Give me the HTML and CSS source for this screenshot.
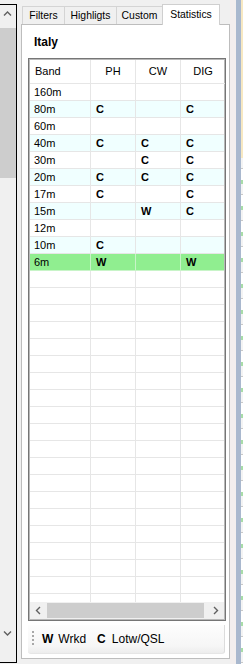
FILE: index.html
```html
<!DOCTYPE html>
<html>
<head>
<meta charset="utf-8">
<link rel="stylesheet" href="styles.css">
</head>
<body>
<div class="app">
  <div class="vscroll">
    <div class="vbtn"><svg width="16" height="17" viewBox="0 0 16 17"><path d="M4 10.5 L7.5 7 L11 10.5" fill="none" stroke="#606060" stroke-width="1.4"/></svg></div>
    <div class="vthumb"></div>
    <div class="vtrack"></div>
    <div class="vbtn"><svg width="16" height="17" viewBox="0 0 16 17"><path d="M4 6.5 L7.5 10 L11 6.5" fill="none" stroke="#606060" stroke-width="1.4"/></svg></div>
    <div class="vfoot"></div>
  </div>
  <div class="tabctl">
    <div class="tabstrip">
      <div class="tab t1">Filters</div>
      <div class="tab t2">Highligts</div>
      <div class="tab t3">Custom</div>
      <div class="tab t4 active">Statistics</div>
    </div>
    <div class="panel">
      <div class="country">Italy</div>
      <div class="grid">
        <div class="row hdr">
          <div class="cell left">Band</div><div class="cell">PH</div><div class="cell">CW</div><div class="cell">DIG</div>
        </div>
        <div class="gbody">
          <div class="row"><div class="cell">160m</div><div class="cell"></div><div class="cell"></div><div class="cell"></div></div>
          <div class="row alt"><div class="cell">80m</div><div class="cell v">C</div><div class="cell"></div><div class="cell v">C</div></div>
          <div class="row"><div class="cell">60m</div><div class="cell"></div><div class="cell"></div><div class="cell"></div></div>
          <div class="row alt"><div class="cell">40m</div><div class="cell v">C</div><div class="cell v">C</div><div class="cell v">C</div></div>
          <div class="row"><div class="cell">30m</div><div class="cell"></div><div class="cell v">C</div><div class="cell v">C</div></div>
          <div class="row alt"><div class="cell">20m</div><div class="cell v">C</div><div class="cell v">C</div><div class="cell v">C</div></div>
          <div class="row"><div class="cell">17m</div><div class="cell v">C</div><div class="cell"></div><div class="cell v">C</div></div>
          <div class="row alt"><div class="cell">15m</div><div class="cell"></div><div class="cell v">W</div><div class="cell v">C</div></div>
          <div class="row"><div class="cell">12m</div><div class="cell"></div><div class="cell"></div><div class="cell"></div></div>
          <div class="row alt"><div class="cell">10m</div><div class="cell v">C</div><div class="cell"></div><div class="cell"></div></div>
          <div class="row sel"><div class="cell">6m</div><div class="cell v">W</div><div class="cell"></div><div class="cell v">W</div></div>
          <div class="row"><div class="cell"></div><div class="cell"></div><div class="cell"></div><div class="cell"></div></div>
          <div class="row"><div class="cell"></div><div class="cell"></div><div class="cell"></div><div class="cell"></div></div>
          <div class="row"><div class="cell"></div><div class="cell"></div><div class="cell"></div><div class="cell"></div></div>
          <div class="row"><div class="cell"></div><div class="cell"></div><div class="cell"></div><div class="cell"></div></div>
          <div class="row"><div class="cell"></div><div class="cell"></div><div class="cell"></div><div class="cell"></div></div>
          <div class="row"><div class="cell"></div><div class="cell"></div><div class="cell"></div><div class="cell"></div></div>
          <div class="row"><div class="cell"></div><div class="cell"></div><div class="cell"></div><div class="cell"></div></div>
          <div class="row"><div class="cell"></div><div class="cell"></div><div class="cell"></div><div class="cell"></div></div>
          <div class="row"><div class="cell"></div><div class="cell"></div><div class="cell"></div><div class="cell"></div></div>
          <div class="row"><div class="cell"></div><div class="cell"></div><div class="cell"></div><div class="cell"></div></div>
          <div class="row"><div class="cell"></div><div class="cell"></div><div class="cell"></div><div class="cell"></div></div>
          <div class="row"><div class="cell"></div><div class="cell"></div><div class="cell"></div><div class="cell"></div></div>
          <div class="row"><div class="cell"></div><div class="cell"></div><div class="cell"></div><div class="cell"></div></div>
          <div class="row"><div class="cell"></div><div class="cell"></div><div class="cell"></div><div class="cell"></div></div>
          <div class="row"><div class="cell"></div><div class="cell"></div><div class="cell"></div><div class="cell"></div></div>
          <div class="row"><div class="cell"></div><div class="cell"></div><div class="cell"></div><div class="cell"></div></div>
          <div class="row"><div class="cell"></div><div class="cell"></div><div class="cell"></div><div class="cell"></div></div>
          <div class="row"><div class="cell"></div><div class="cell"></div><div class="cell"></div><div class="cell"></div></div>
          <div class="row"><div class="cell"></div><div class="cell"></div><div class="cell"></div><div class="cell"></div></div>
          <div class="row"><div class="cell"></div><div class="cell"></div><div class="cell"></div><div class="cell"></div></div>
        </div>
        <div class="hscroll">
          <div class="hbtn"><svg width="17" height="17" viewBox="0 0 17 17"><path d="M10 5 L6.5 8.5 L10 12" fill="none" stroke="#606060" stroke-width="1.4"/></svg></div>
          <div class="hthumb"></div>
          <div class="htrack"></div>
          <div class="hbtn"><svg width="17" height="17" viewBox="0 0 17 17"><path d="M7 5 L10.5 8.5 L7 12" fill="none" stroke="#606060" stroke-width="1.4"/></svg></div>
        </div>
      </div>
      <div class="legend">
        <div class="grip"></div>
        <b class="lw">W</b><span class="lt1">Wrkd</span>
        <b class="lc">C</b><span>Lotw/QSL</span>
      </div>
    </div>
  </div>
  <div class="rstrip">
    <div class="ra"></div>
    <div class="rb"></div>
    <div class="rc"><div class="rc-top"></div><div class="rc-bot"></div></div>
  </div>
</div>
</body>
</html>
```

FILE: styles.css
```css
* { box-sizing: border-box; margin: 0; padding: 0; }
html, body { width: 243px; height: 664px; overflow: hidden; }
body {
  background: #f0f0f0;
  font-family: "Liberation Sans", Arial, sans-serif;
  font-size: 11px;
  color: #000;
}
.app { display: flex; height: 664px; }

/* left vertical scrollbar */
.vscroll {
  flex: none;
  width: 17px;
  height: 659px;
  margin-top: 4px;
  border: 1px solid #000;
  border-left: 0;
  display: flex;
  flex-direction: column;
  background: #f0f0f0;
}
.vbtn { flex: none; height: 17px; display: flex; align-items: center; justify-content: center; }
.vbtn svg { display: block; }
.vthumb { flex: none; height: 150px; margin-top: 6px; background: #cdcdcd; }
.vtrack { flex: 1; }
.vfoot { flex: none; height: 20px; }

/* tab control */
.tabctl { flex: none; width: 209px; margin-left: 4px; display: flex; flex-direction: column; }
.tabstrip { height: 24px; display: flex; align-items: flex-end; padding-left: 1px; }
.tab {
  height: 18px;
  border: 1px solid #d4d4d4;
  border-bottom: 0;
  margin-right: -1px;
  background: #f0f0f0;
  font-size: 10.4px;
  display: flex;
  align-items: center;
  justify-content: center;
  white-space: nowrap;
}
.t1 { width: 43px; }
.t2 { width: 53px; }
.t3 { width: 47px; }
.t4 { width: 58px; }
.tab.active {
  height: 21px;
  background: #fff;
  margin-bottom: -1px;
  border-color: #cfcfcf;
  position: relative;
  z-index: 1;
  padding-bottom: 2px;
}
.panel {
  height: 635px;
  border: 1px solid #bdbdbd;
  background: #fff;
  display: flex;
  flex-direction: column;
}
.country {
  height: 33px;
  display: flex;
  align-items: center;
  padding-left: 12px;
  font-weight: bold;
  font-size: 12px;
}

/* data grid */
.grid {
  margin-left: 6px;
  width: 198px;
  height: 563px;
  border: 1px solid #767676;
  padding: 1px;
  box-shadow: inset 0 0 0 1px #b8b8b8;
  display: flex;
  flex-direction: column;
  overflow: hidden;
}
.row {
  display: grid;
  grid-template-columns: 61px 45px 45px 45px;
  height: 17px;
  flex: none;
  background: #fff;
}
.cell {
  border-right: 1px solid #e6e6e6;
  border-bottom: 1px solid #e6e6e6;
  padding-left: 4px;
  line-height: 16px;
  white-space: nowrap;
  overflow: hidden;
}
.cell.v { font-weight: bold; padding-left: 5px; }
.row.alt { background: #f0ffff; }
.row.sel { background: #90ee90; }
.row.sel .cell { border-color: #c8f4c8; }
.hdr { height: 24px; }
.hdr .cell { line-height: 23px; text-align: center; padding-left: 0; }
.hdr .cell.left { text-align: left; padding-left: 5px; }
.gbody { height: 518px; overflow: hidden; flex: none; }

.hscroll { flex: none; height: 17px; display: flex; background: #f0f0f0; }
.hbtn { flex: none; width: 17px; display: flex; align-items: center; justify-content: center; }
.hbtn svg { display: block; }
.hthumb { flex: none; width: 157px; margin: 1px 0; background: #cdcdcd; }
.htrack { flex: 1; }

/* legend toolstrip */
.legend {
  margin-top: 4px;
  margin-left: 6px;
  width: 197px;
  height: 29px;
  display: flex;
  align-items: center;
  padding-left: 4px;
  font-size: 12px;
  background: linear-gradient(to bottom, #fdfdfd 0%, #f6f6f6 75%, #ededed 100%);
  border-right: 1px solid #dcdcdc;
  border-bottom: 1px solid #e6e6e6;
  border-radius: 0 0 3px 3px;
}
.grip {
  width: 2px;
  height: 16px;
  margin-right: 8px;
  background: repeating-linear-gradient(to bottom, #a8a8a8 0 2px, transparent 2px 4px);
}
.lw { margin-right: 5px; }
.lt1 { margin-right: 11px; }
.lc { margin-right: 6px; }

/* right background strip */
.rstrip { flex: none; width: 13px; display: flex; }
.ra { width: 6px; background: #f2eeee; }
.rb { width: 5px; background: #a9b8ce; }
.rc { width: 2px; display: flex; flex-direction: column; }
.rc-top { height: 158px; background: #f7e8c2; }
.rc-bot {
  flex: 1;
  background: repeating-linear-gradient(to bottom, #f4f4f4 0 10px, #c9c9c9 10px 11px, #ffffff 11px 22px, #a8dca8 22px 26px);
}
```
